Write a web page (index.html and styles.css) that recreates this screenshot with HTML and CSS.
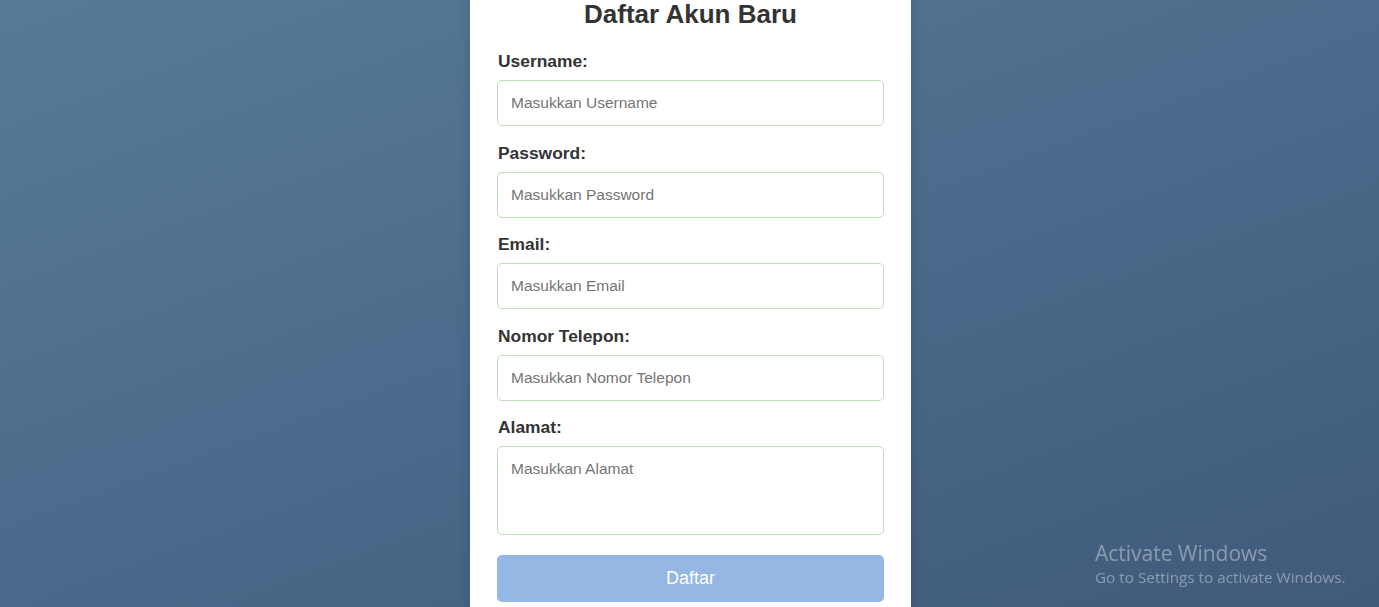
FILE: index.html
```html
<!DOCTYPE html>
<html lang="id">
<head>
<meta charset="utf-8">
<title>Daftar Akun Baru</title>
<link rel="stylesheet" href="styles.css">
</head>
<body>
<div class="page">
  <form class="card">
    <h2 class="title">Daftar Akun Baru</h2>
    <div class="group">
      <label class="label">Username:</label>
      <input class="field" type="text" placeholder="Masukkan Username">
    </div>
    <div class="group">
      <label class="label">Password:</label>
      <input class="field" type="password" placeholder="Masukkan Password">
    </div>
    <div class="group">
      <label class="label">Email:</label>
      <input class="field" type="email" placeholder="Masukkan Email">
    </div>
    <div class="group">
      <label class="label">Nomor Telepon:</label>
      <input class="field" type="text" placeholder="Masukkan Nomor Telepon">
    </div>
    <div class="group">
      <label class="label">Alamat:</label>
      <textarea class="field area" placeholder="Masukkan Alamat"></textarea>
    </div>
    <button class="btn" type="button">Daftar</button>
  </form>
</div>
<div class="activate">
  <div class="act-title">Activate Windows</div>
  <div class="act-sub">Go to Settings to activate Windows.</div>
</div>
</body>
</html>
```
FILE: styles.css
```css
html, body {
  margin: 0;
  padding: 0;
  height: 607px;
  overflow: hidden;
}
body {
  background: linear-gradient(160deg, #567b97 0%, #4c6a8b 50%, #3f5a7b 100%);
  font-family: "Liberation Sans", Arial, sans-serif;
  color: #333;
}
.page {
  display: flex;
  justify-content: center;
  padding-left: 2px;
}
.card {
  width: 441px;
  box-sizing: border-box;
  background: #fff;
  padding: 0 27px 40px;
  margin-top: -12px;
  box-shadow: 0 0 12px rgba(0, 0, 0, 0.15);
}
.title {
  margin: 0;
  padding-top: 11px;
  text-align: center;
  font-size: 26px;
  line-height: 30px;
  font-weight: bold;
  color: #333;
  margin-bottom: 22px;
}
.group {
  display: flex;
  flex-direction: column;
  margin-bottom: 16.5px;
}
.label {
  font-size: 17.4px;
  line-height: 20px;
  font-weight: bold;
  color: #333;
  margin-bottom: 9px;
  padding-left: 1px;
}
.field {
  box-sizing: border-box;
  width: 100%;
  height: 46px;
  border: 1px solid #c2dbbe;
  border-radius: 5px;
  padding: 0 13px;
  font-family: "Liberation Sans", Arial, sans-serif;
  font-size: 15.5px;
  color: #333;
  background: #fff;
  outline: none;
}
.field::placeholder {
  color: #757575;
}
.area {
  height: 89px;
  padding: 13px 13px;
  resize: none;
  line-height: 18px;
}
.group:last-of-type {
  margin-bottom: 20px;
}
.btn {
  display: block;
  width: 100%;
  height: 47px;
  border: none;
  border-radius: 5px;
  background: #95b7e3;
  color: #fff;
  font-family: "Liberation Sans", Arial, sans-serif;
  font-size: 18px;
}
.activate {
  position: fixed;
  left: 1095px;
  top: 540px;
  color: rgba(255, 255, 255, 0.38);
  font-family: "Open Sans", "Noto Sans", sans-serif;
}
.act-title {
  font-size: 21px;
  line-height: 26px;
}
.act-sub {
  font-size: 15.3px;
  line-height: 22px;
}
```
